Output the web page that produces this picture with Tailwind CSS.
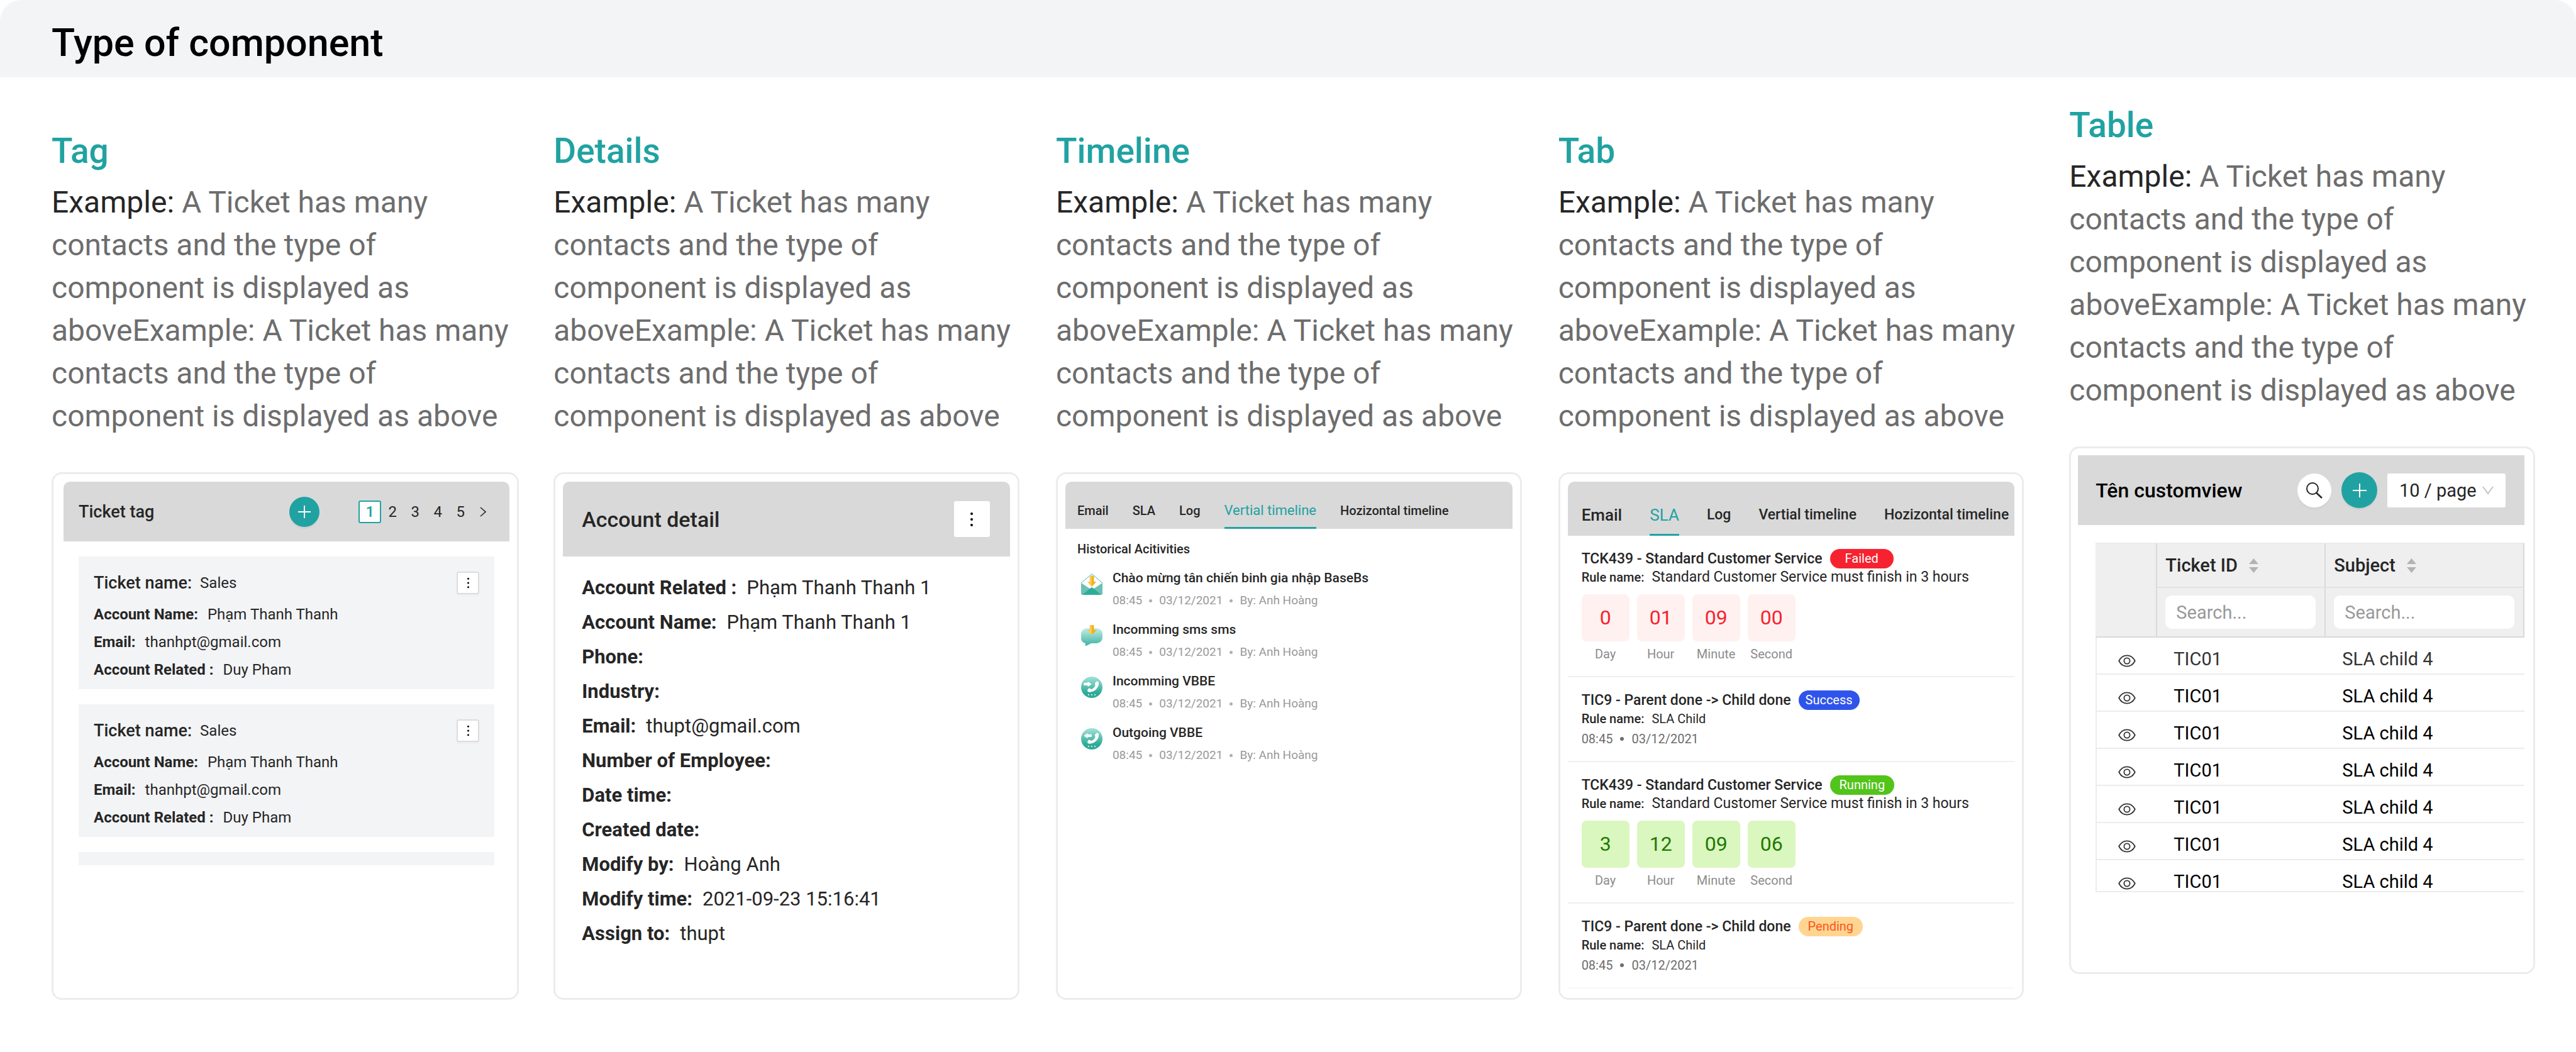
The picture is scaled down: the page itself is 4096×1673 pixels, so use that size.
<!DOCTYPE html>
<html lang="en">
<head>
<meta charset="utf-8">
<title>Type of component</title>
<script src="https://cdn.jsdelivr.net/npm/@tailwindcss/browser@4"></script>
</head>
<body class="bg-white font-['Roboto',sans-serif] text-[#262626]">

<!-- Shared icons -->
<svg class="absolute size-0" aria-hidden="true">
  <defs>
    <linearGradient id="g-bubble" x1="0" y1="0" x2="0" y2="1"><stop offset="0" stop-color="#c3ede6"/><stop offset="1" stop-color="#3cb2a2"/></linearGradient>
    <linearGradient id="g-call" x1="0" y1="0" x2="0" y2="1"><stop offset="0" stop-color="#a3e3d9"/><stop offset=".75" stop-color="#2fab98"/></linearGradient>
  </defs>
  <symbol id="i-plus" viewBox="0 0 22 22"><path d="M11 0v22M0 11h22" stroke="currentColor" stroke-width="2" fill="none"/></symbol>
  <symbol id="i-dots" viewBox="0 0 6 24"><circle cx="3" cy="3" r="2"/><circle cx="3" cy="12" r="2"/><circle cx="3" cy="21" r="2"/></symbol>
  <symbol id="i-eye" viewBox="0 0 28 20"><path d="M1.2 10C4.2 4.400 8.600 1.300 14 1.300S23.800 4.400 26.800 10C23.800 15.600 19.400 18.700 14 18.700S4.200 15.600 1.200 10Z" fill="none" stroke="currentColor" stroke-width="1.800" stroke-linejoin="round"/><circle cx="14" cy="10" r="4.600" fill="none" stroke="currentColor" stroke-width="1.800"/></symbol>
  <symbol id="i-sort" viewBox="0 0 15 23"><path d="M7.500 0 15 9H0ZM7.500 23 0 14h15Z"/></symbol>
  <symbol id="i-mail" viewBox="0 0 40 40">
    <path d="M.5 17.500 20 .8 39.500 17.500V30H.5Z" fill="#fff" stroke="#6cc8ba" stroke-width="1.200"/>
    <path d="M0 17.500 20 31 40 17.500V37.500a2.500 2.500 0 0 1-2.500 2.500h-35A2.500 2.500 0 0 1 0 37.500Z" fill="#69c2b3"/>
    <path d="M16.500 28.700 20 31l3.500-2.300L20 26Z" fill="#fff"/>
    <path d="M2 40 18 27q2-1.600 4 0L38 40Z" fill="#2fab98"/>
    <path d="M20 4h-2.500A1.500 1.500 0 0 0 16 5.500V15.300H11.500L20 25Z" fill="#fcc75f"/>
    <path d="M20 4h2.500A1.500 1.500 0 0 1 24 5.500V15.300H28.500L20 25Z" fill="#f0b414"/>
  </symbol>
  <symbol id="i-sms" viewBox="0 0 40 40">
    <path d="M11 6H29A11 11 0 0 1 40 17V23A11 11 0 0 1 29 34H19L9 39q-1 .3-1-1V34A9 9 0 0 1 0 24V17A11 11 0 0 1 11 6Z" fill="url(#g-bubble)"/>
    <path d="M20 0h-2.500A1.500 1.500 0 0 0 16 1.500V9H10L20 18Z" fill="#fcc75f"/>
    <path d="M20 0h2.500A1.500 1.500 0 0 1 24 1.500V9H30L20 18Z" fill="#f0b414"/>
  </symbol>
  <symbol id="i-handset" viewBox="0 0 40 40">
    <circle cx="20" cy="20" r="20" fill="url(#g-call)"/>
    <path d="M29.500 9c2.600-.4 3.800 1.400 3.500 4.500C32.300 21.500 25.500 28.800 16 29c-3 0-4.600-1-4-3.500.4-1.600 1.500-3.200 3-3.800 1.800-.4 2.700 1.900 4.300 1.800 3-.5 6.200-3.700 7.200-7 .2-1.400-1-2-.7-3.500.4-2 2-3.700 3.700-4Z" fill="#fff"/>
    <path d="M13 33h2v2h-2zM19 33h2v2h-2zM25 33h2v2h-2z" fill="#fff"/>
  </symbol>
  <symbol id="i-call-in" viewBox="0 0 40 40"><use href="#i-handset"/><path d="M5 11.500h7.500V9L19.700 14l-7.200 5V16.500H5Z" fill="#fff"/></symbol>
  <symbol id="i-call-out" viewBox="0 0 40 40"><use href="#i-handset"/><path d="M19.700 11.500h-7.500V9L5 14l7.200 5V16.500h7.500Z" fill="#fff"/></symbol>
</svg>

<header class="rounded-t-[34px] bg-[#f3f4f6] px-[82px] pt-[32px] pb-[19px]">
  <h1 class="text-[61px] leading-[72px] font-medium text-black">Type of component</h1>
</header>

<main class="flex items-start pr-[65px] pb-[83px] pl-[82px]">

  <!-- Tag -->
  <section class="min-w-0 flex-[871] pt-[85px]">
    <h2 class="text-[55px] leading-[64px] font-medium text-[#21a2a2]">Tag</h2>
    <p class="mt-[16px] text-[48px] leading-[68px] text-[#6d6d6d]"><span class="text-[#262626]">Example:</span> A Ticket has many contacts and the type of component is displayed as aboveExample: A Ticket has many contacts and the type of component is displayed as above</p>
    <div class="mt-[55px] min-h-[839px] rounded-[16px] border-[3px] border-[#ececec] pt-[12px] pr-[12px] pl-[16px]">
      <div class="flex h-[95px] items-center rounded-t-[10px] bg-[#d9d9d9] px-[24px]">
        <h3 class="grow text-[27px] leading-[36px] font-medium">Ticket tag</h3>
        <button type="button" aria-label="Add ticket" class="flex size-[48px] items-center justify-center rounded-full bg-[#21a2a2] text-white shadow-[0_3px_0_rgba(0,0,0,0.04)]"><svg class="size-[20px]"><use href="#i-plus"/></svg></button>
        <nav aria-label="Pages" class="ml-[62px] flex text-[24px] leading-[32px]">
          <button type="button" class="size-[36px] rounded-[3px] border-2 border-[#21a2a2] bg-white font-medium text-[#21a2a2]">1</button>
          <button type="button" class="size-[36px]">2</button>
          <button type="button" class="size-[36px]">3</button>
          <button type="button" class="size-[36px]">4</button>
          <button type="button" class="size-[36px]">5</button>
          <button type="button" aria-label="Next" class="flex size-[36px] items-center justify-center"><svg class="h-[16px] w-[10px]" viewBox="0 0 10 16"><path d="M1 1l8 7-8 7" fill="none" stroke="currentColor" stroke-width="1.600"/></svg></button>
        </nav>
      </div>
      <div class="flex flex-col gap-[24px] px-[24px] pt-[24px]">
        <article class="bg-[#f3f4f6] px-[24px] pt-[24px] pb-[9px]">
          <div class="mb-[10px] flex h-[36px] items-center gap-[13px]">
            <span class="text-[27px] leading-[36px] font-medium">Ticket name:</span><span class="grow text-[24px] leading-[36px]">Sales</span>
            <button type="button" aria-label="More" class="flex size-[36px] items-center justify-center rounded-[3px] border-2 border-[#dcdcdc] bg-white shadow-[0_3px_0_rgba(0,0,0,0.02)]"><svg class="h-[18px] w-[5px]"><use href="#i-dots"/></svg></button>
          </div>
          <p class="text-[24px] leading-[44px]"><b class="mr-[15px] font-bold">Account Name:</b>Phạm Thanh Thanh</p>
          <p class="text-[24px] leading-[44px]"><b class="mr-[15px] font-bold">Email:</b>thanhpt@gmail.com</p>
          <p class="text-[24px] leading-[44px]"><b class="mr-[15px] font-bold">Account Related :</b>Duy Pham</p>
        </article>
        <article class="bg-[#f3f4f6] px-[24px] pt-[24px] pb-[9px]">
          <div class="mb-[10px] flex h-[36px] items-center gap-[13px]">
            <span class="text-[27px] leading-[36px] font-medium">Ticket name:</span><span class="grow text-[24px] leading-[36px]">Sales</span>
            <button type="button" aria-label="More" class="flex size-[36px] items-center justify-center rounded-[3px] border-2 border-[#dcdcdc] bg-white shadow-[0_3px_0_rgba(0,0,0,0.02)]"><svg class="h-[18px] w-[5px]"><use href="#i-dots"/></svg></button>
          </div>
          <p class="text-[24px] leading-[44px]"><b class="mr-[15px] font-bold">Account Name:</b>Phạm Thanh Thanh</p>
          <p class="text-[24px] leading-[44px]"><b class="mr-[15px] font-bold">Email:</b>thanhpt@gmail.com</p>
          <p class="text-[24px] leading-[44px]"><b class="mr-[15px] font-bold">Account Related :</b>Duy Pham</p>
        </article>
        <div class="h-[21px] bg-[#f3f4f6]"></div>
      </div>
    </div>
  </section>

  <!-- Details -->
  <section class="ml-[55px] min-w-0 flex-[868] pt-[85px]">
    <h2 class="text-[55px] leading-[64px] font-medium text-[#21a2a2]">Details</h2>
    <p class="mt-[16px] text-[48px] leading-[68px] text-[#6d6d6d]"><span class="text-[#262626]">Example:</span> A Ticket has many contacts and the type of component is displayed as aboveExample: A Ticket has many contacts and the type of component is displayed as above</p>
    <div class="mt-[55px] min-h-[839px] rounded-[16px] border-[3px] border-[#ececec] px-[12px] pt-[12px]">
      <div class="flex h-[119px] items-center justify-between rounded-t-[10px] bg-[#d9d9d9] pr-[32px] pl-[30px]">
        <h3 class="text-[34px] leading-[44px] font-medium">Account detail</h3>
        <button type="button" aria-label="More" class="flex size-[57px] items-center justify-center rounded-[3px] bg-white"><svg class="h-[24px] w-[6px]"><use href="#i-dots"/></svg></button>
      </div>
      <div class="px-[30px] pt-[22px] text-[31px] leading-[55px]">
        <p><b class="mr-[16px] font-bold">Account Related :</b>Phạm Thanh Thanh 1</p>
        <p><b class="mr-[16px] font-bold">Account Name:</b>Phạm Thanh Thanh 1</p>
        <p><b class="font-bold">Phone:</b></p>
        <p><b class="font-bold">Industry:</b></p>
        <p><b class="mr-[16px] font-bold">Email:</b>thupt@gmail.com</p>
        <p><b class="font-bold">Number of Employee:</b></p>
        <p><b class="font-bold">Date time:</b></p>
        <p><b class="font-bold">Created date:</b></p>
        <p><b class="mr-[16px] font-bold">Modify by:</b>Hoàng Anh</p>
        <p><b class="mr-[16px] font-bold">Modify time:</b>2021-09-23 15:16:41</p>
        <p><b class="mr-[16px] font-bold">Assign to:</b>thupt</p>
      </div>
    </div>
  </section>

  <!-- Timeline -->
  <section class="ml-[58px] min-w-0 flex-[868] pt-[85px]">
    <h2 class="text-[55px] leading-[64px] font-medium text-[#21a2a2]">Timeline</h2>
    <p class="mt-[16px] text-[48px] leading-[68px] text-[#6d6d6d]"><span class="text-[#262626]">Example:</span> A Ticket has many contacts and the type of component is displayed as aboveExample: A Ticket has many contacts and the type of component is displayed as above</p>
    <div class="mt-[55px] min-h-[839px] rounded-[16px] border-[3px] border-[#ececec] px-[12px] pt-[12px]">
      <div role="tablist" class="flex items-end gap-[38px] rounded-t-[10px] bg-[#d9d9d9] px-[19px] pt-[32px] text-[20px] leading-[28px] font-medium whitespace-nowrap">
        <button type="button" role="tab" class="border-b-[3px] border-transparent pb-[12px]">Email</button>
        <button type="button" role="tab" class="border-b-[3px] border-transparent pb-[12px]">SLA</button>
        <button type="button" role="tab" class="border-b-[3px] border-transparent pb-[12px]">Log</button>
        <button type="button" role="tab" aria-selected="true" class="border-b-[3px] border-[#21a2a2] pb-[12px] text-[22px] font-normal text-[#21a2a2]">Vertial timeline</button>
        <button type="button" role="tab" class="border-b-[3px] border-transparent pb-[12px]">Hozizontal timeline</button>
      </div>
      <h3 class="mt-[18px] pl-[19px] text-[20px] leading-[28px] font-medium">Historical Acitivities</h3>
      <ul class="mt-[18px] flex flex-col gap-[18px] pl-[25px]">
        <li class="flex gap-[16px]">
          <svg class="mt-[7px] size-[34px]"><use href="#i-mail"/></svg>
          <div>
            <h4 class="text-[21px] leading-[28px] font-medium">Chào mừng tân chiến binh gia nhập BaseBs</h4>
            <p class="mt-[8px] flex items-center gap-[11px] text-[19px] leading-[28px] text-[#999]"><span>08:45</span><i class="size-[5px] rounded-full bg-[#b0b0b0]"></i><span>03/12/2021</span><i class="size-[5px] rounded-full bg-[#b0b0b0]"></i><span>By: Anh Hoàng</span></p>
          </div>
        </li>
        <li class="flex gap-[16px]">
          <svg class="mt-[7px] size-[34px]"><use href="#i-sms"/></svg>
          <div>
            <h4 class="text-[21px] leading-[28px] font-medium">Incomming sms sms</h4>
            <p class="mt-[8px] flex items-center gap-[11px] text-[19px] leading-[28px] text-[#999]"><span>08:45</span><i class="size-[5px] rounded-full bg-[#b0b0b0]"></i><span>03/12/2021</span><i class="size-[5px] rounded-full bg-[#b0b0b0]"></i><span>By: Anh Hoàng</span></p>
          </div>
        </li>
        <li class="flex gap-[16px]">
          <svg class="mt-[7px] size-[34px]"><use href="#i-call-in"/></svg>
          <div>
            <h4 class="text-[21px] leading-[28px] font-medium">Incomming VBBE</h4>
            <p class="mt-[8px] flex items-center gap-[11px] text-[19px] leading-[28px] text-[#999]"><span>08:45</span><i class="size-[5px] rounded-full bg-[#b0b0b0]"></i><span>03/12/2021</span><i class="size-[5px] rounded-full bg-[#b0b0b0]"></i><span>By: Anh Hoàng</span></p>
          </div>
        </li>
        <li class="flex gap-[16px]">
          <svg class="mt-[7px] size-[34px]"><use href="#i-call-out"/></svg>
          <div>
            <h4 class="text-[21px] leading-[28px] font-medium">Outgoing VBBE</h4>
            <p class="mt-[8px] flex items-center gap-[11px] text-[19px] leading-[28px] text-[#999]"><span>08:45</span><i class="size-[5px] rounded-full bg-[#b0b0b0]"></i><span>03/12/2021</span><i class="size-[5px] rounded-full bg-[#b0b0b0]"></i><span>By: Anh Hoàng</span></p>
          </div>
        </li>
      </ul>
    </div>
  </section>

  <!-- Tab -->
  <section class="ml-[58px] min-w-0 flex-[868] pt-[85px]">
    <h2 class="text-[55px] leading-[64px] font-medium text-[#21a2a2]">Tab</h2>
    <p class="mt-[16px] text-[48px] leading-[68px] text-[#6d6d6d]"><span class="text-[#262626]">Example:</span> A Ticket has many contacts and the type of component is displayed as aboveExample: A Ticket has many contacts and the type of component is displayed as above</p>
    <div class="mt-[55px] min-h-[839px] rounded-[16px] border-[3px] border-[#ececec] px-[12px] pt-[12px]">
      <div role="tablist" class="flex items-end gap-[44px] rounded-t-[10px] bg-[#d9d9d9] pt-[37px] pl-[22px] text-[23px] leading-[32px] font-medium whitespace-nowrap">
        <button type="button" role="tab" class="border-b-[3px] border-transparent pb-[14px] text-[26px]">Email</button>
        <button type="button" role="tab" aria-selected="true" class="border-b-[3px] border-[#21a2a2] pb-[14px] text-[26px] font-normal text-[#21a2a2]">SLA</button>
        <button type="button" role="tab" class="border-b-[3px] border-transparent pb-[14px]">Log</button>
        <button type="button" role="tab" class="border-b-[3px] border-transparent pb-[14px]">Vertial timeline</button>
        <button type="button" role="tab" class="border-b-[3px] border-transparent pb-[14px]">Hozizontal timeline</button>
      </div>

      <article class="border-b-2 border-[#f0f0f0] px-[22px] py-[21px]">
        <div class="flex items-center gap-[12px]"><h4 class="text-[23px] leading-[31px] font-medium">TCK439 - Standard Customer Service</h4><span class="rounded-full bg-[#f7222f] px-[24px] text-[20px] leading-[31px] text-white">Failed</span></div>
        <p class="flex items-baseline gap-[12px] text-[23px] leading-[28px]"><span class="text-[20px] font-medium">Rule name:</span>Standard Customer Service must finish in 3 hours</p>
        <div class="mt-[13px] flex gap-[12px] text-center text-[20px] leading-[28px] text-[#8c8c8c]">
          <div class="w-[76px]"><div class="mb-[6px] rounded-[8px] bg-[#fff1f0] text-[32px] leading-[75px] text-[#f7222f]">0</div>Day</div>
          <div class="w-[76px]"><div class="mb-[6px] rounded-[8px] bg-[#fff1f0] text-[32px] leading-[75px] text-[#f7222f]">01</div>Hour</div>
          <div class="w-[76px]"><div class="mb-[6px] rounded-[8px] bg-[#fff1f0] text-[32px] leading-[75px] text-[#f7222f]">09</div>Minute</div>
          <div class="w-[76px]"><div class="mb-[6px] rounded-[8px] bg-[#fff1f0] text-[32px] leading-[75px] text-[#f7222f]">00</div>Second</div>
        </div>
      </article>

      <article class="border-b-2 border-[#f0f0f0] px-[22px] py-[21px]">
        <div class="flex items-center gap-[12px]"><h4 class="text-[23px] leading-[31px] font-medium">TIC9 - Parent done -&gt; Child done</h4><span class="rounded-full bg-[#2f54eb] px-[11px] text-[20px] leading-[31px] text-white">Success</span></div>
        <p class="flex items-baseline gap-[12px] text-[20px] leading-[28px]"><span class="font-medium">Rule name:</span>SLA Child</p>
        <p class="mt-[4px] flex items-center gap-[12px] text-[20px] leading-[28px] text-[#6d6d6d]"><span>08:45</span><i class="size-[6px] rounded-full bg-[#6d6d6d]"></i><span>03/12/2021</span></p>
      </article>

      <article class="border-b-2 border-[#f0f0f0] px-[22px] py-[21px]">
        <div class="flex items-center gap-[12px]"><h4 class="text-[23px] leading-[31px] font-medium">TCK439 - Standard Customer Service</h4><span class="rounded-full bg-[#52c41a] px-[15px] text-[20px] leading-[31px] text-white">Running</span></div>
        <p class="flex items-baseline gap-[12px] text-[23px] leading-[28px]"><span class="text-[20px] font-medium">Rule name:</span>Standard Customer Service must finish in 3 hours</p>
        <div class="mt-[13px] flex gap-[12px] text-center text-[20px] leading-[28px] text-[#8c8c8c]">
          <div class="w-[76px]"><div class="mb-[6px] rounded-[8px] bg-[#d9f7be] text-[32px] leading-[75px] text-[#237804]">3</div>Day</div>
          <div class="w-[76px]"><div class="mb-[6px] rounded-[8px] bg-[#d9f7be] text-[32px] leading-[75px] text-[#237804]">12</div>Hour</div>
          <div class="w-[76px]"><div class="mb-[6px] rounded-[8px] bg-[#d9f7be] text-[32px] leading-[75px] text-[#237804]">09</div>Minute</div>
          <div class="w-[76px]"><div class="mb-[6px] rounded-[8px] bg-[#d9f7be] text-[32px] leading-[75px] text-[#237804]">06</div>Second</div>
        </div>
      </article>

      <article class="border-b-2 border-[#f7f7f7] px-[22px] py-[21px]">
        <div class="flex items-center gap-[12px]"><h4 class="text-[23px] leading-[31px] font-medium">TIC9 - Parent done -&gt; Child done</h4><span class="rounded-full bg-[#ffd591] px-[15px] text-[20px] leading-[31px] text-[#fa541c]">Pending</span></div>
        <p class="flex items-baseline gap-[12px] text-[20px] leading-[28px]"><span class="font-medium">Rule name:</span>SLA Child</p>
        <p class="mt-[4px] flex items-center gap-[12px] text-[20px] leading-[28px] text-[#6d6d6d]"><span>08:45</span><i class="size-[6px] rounded-full bg-[#6d6d6d]"></i><span>03/12/2021</span></p>
      </article>
    </div>
  </section>

  <!-- Table -->
  <section class="ml-[72px] min-w-0 flex-[868] pt-[44px]">
    <h2 class="text-[55px] leading-[64px] font-medium text-[#21a2a2]">Table</h2>
    <p class="mt-[16px] text-[48px] leading-[68px] text-[#6d6d6d]"><span class="text-[#262626]">Example:</span> A Ticket has many contacts and the type of component is displayed as aboveExample: A Ticket has many contacts and the type of component is displayed as above</p>
    <div class="mt-[55px] min-h-[839px] rounded-[16px] border-[3px] border-[#ececec] pt-[11px] pr-[14px] pl-[11px]">
      <div class="flex h-[111px] items-center gap-[16px] bg-[#d9d9d9] pr-[30px] pl-[28px]">
        <h3 class="grow text-[32px] leading-[44px] font-medium text-black">Tên customview</h3>
        <button type="button" aria-label="Search" class="flex size-[54px] items-center justify-center rounded-full bg-white shadow-[0_4px_0_rgba(0,0,0,0.02)]"><svg class="size-[26px]" viewBox="0 0 26 26"><circle cx="10" cy="10" r="9" fill="none" stroke="currentColor" stroke-width="2"/><path d="M16 16.500 25 25" stroke="currentColor" stroke-width="2.600"/></svg></button>
        <button type="button" aria-label="Add" class="flex size-[57px] items-center justify-center rounded-full bg-[#21a2a2] text-white shadow-[0_3px_0_rgba(0,0,0,0.04)]"><svg class="size-[22px]"><use href="#i-plus"/></svg></button>
        <div class="relative">
          <select aria-label="Rows per page" class="block h-[54px] w-[188px] appearance-none rounded-[3px] bg-white pl-[19px] text-[29px] leading-[40px]"><option>10 / page</option></select>
          <svg class="pointer-events-none absolute top-[20px] right-[19px] h-[14px] w-[18px]" viewBox="0 0 18 14"><path d="M1 1l8 11 8-11" fill="none" stroke="#bfbfbf" stroke-width="1.800"/></svg>
        </div>
      </div>
      <div class="pt-[28px] pl-[28px]">
        <table class="w-full table-fixed border-separate border-spacing-0 text-left text-[29px] leading-[30px] text-black">
          <colgroup><col class="w-[98px]"><col class="w-[268px]"><col></colgroup>
          <thead class="bg-[#efefef] text-[#262626]">
            <tr class="h-[72px]">
              <th rowspan="2" class="border-t-2 border-r-2 border-b-2 border-t-[#ececec] border-r-[#d9d9d9] border-b-[#d9d9d9]"></th>
              <th class="border-t-2 border-r-2 border-b-2 border-t-[#ececec] border-r-[#d9d9d9] border-b-[#e2e2e2] p-0 pl-[13px] font-medium"><span class="flex items-center gap-[18px]">Ticket ID<svg class="h-[23px] w-[15px] fill-[#b3b3b3]"><use href="#i-sort"/></svg></span></th>
              <th class="border-t-2 border-r-2 border-b-2 border-t-[#ececec] border-r-[#d9d9d9] border-b-[#e2e2e2] p-0 pl-[13px] font-medium"><span class="flex items-center gap-[18px]">Subject<svg class="h-[23px] w-[15px] fill-[#b3b3b3]"><use href="#i-sort"/></svg></span></th>
            </tr>
            <tr class="h-[79px]">
              <th class="border-r-2 border-b-2 border-[#d9d9d9] p-0 pr-[14px] pl-[13px] font-normal"><input type="text" aria-label="Search ticket ID" placeholder="Search..." class="block h-[53px] w-full rounded-[10px] bg-white px-[17px] placeholder:text-[#999]"></th>
              <th class="border-r-2 border-b-2 border-[#d9d9d9] p-0 pr-[14px] pl-[13px] font-normal"><input type="text" aria-label="Search subject" placeholder="Search..." class="block h-[53px] w-full rounded-[10px] bg-white px-[17px] placeholder:text-[#999]"></th>
            </tr>
          </thead>
          <tbody class="align-top">
            <tr class="text-[#333]"><td class="border-b-2 border-l-2 border-[#ececec] pt-[27px]"><svg class="mx-auto h-[20px] w-[28px] text-[#333]"><use href="#i-eye"/></svg></td><td class="border-b-2 border-[#ececec] pt-[19px] pb-[8px] pl-[26px]">TIC01</td><td class="border-b-2 border-[#ececec] pt-[19px] pb-[8px] pl-[26px]">SLA child 4</td></tr>
            <tr><td class="border-b-2 border-l-2 border-[#ececec] pt-[27px]"><svg class="mx-auto h-[20px] w-[28px] text-[#333]"><use href="#i-eye"/></svg></td><td class="border-b-2 border-[#ececec] pt-[19px] pb-[8px] pl-[26px]">TIC01</td><td class="border-b-2 border-[#ececec] pt-[19px] pb-[8px] pl-[26px]">SLA child 4</td></tr>
            <tr><td class="border-b-2 border-l-2 border-[#ececec] pt-[27px]"><svg class="mx-auto h-[20px] w-[28px] text-[#333]"><use href="#i-eye"/></svg></td><td class="border-b-2 border-[#ececec] pt-[19px] pb-[8px] pl-[26px]">TIC01</td><td class="border-b-2 border-[#ececec] pt-[19px] pb-[8px] pl-[26px]">SLA child 4</td></tr>
            <tr><td class="border-b-2 border-l-2 border-[#ececec] pt-[27px]"><svg class="mx-auto h-[20px] w-[28px] text-[#333]"><use href="#i-eye"/></svg></td><td class="border-b-2 border-[#ececec] pt-[19px] pb-[8px] pl-[26px]">TIC01</td><td class="border-b-2 border-[#ececec] pt-[19px] pb-[8px] pl-[26px]">SLA child 4</td></tr>
            <tr><td class="border-b-2 border-l-2 border-[#ececec] pt-[27px]"><svg class="mx-auto h-[20px] w-[28px] text-[#333]"><use href="#i-eye"/></svg></td><td class="border-b-2 border-[#ececec] pt-[19px] pb-[8px] pl-[26px]">TIC01</td><td class="border-b-2 border-[#ececec] pt-[19px] pb-[8px] pl-[26px]">SLA child 4</td></tr>
            <tr><td class="border-b-2 border-l-2 border-[#ececec] pt-[27px]"><svg class="mx-auto h-[20px] w-[28px] text-[#333]"><use href="#i-eye"/></svg></td><td class="border-b-2 border-[#ececec] pt-[19px] pb-[8px] pl-[26px]">TIC01</td><td class="border-b-2 border-[#ececec] pt-[19px] pb-[8px] pl-[26px]">SLA child 4</td></tr>
            <tr><td class="border-b-2 border-l-2 border-[#ececec] pt-[27px]"><svg class="mx-auto h-[20px] w-[28px] text-[#333]"><use href="#i-eye"/></svg></td><td class="border-b-2 border-[#ececec] pt-[19px] pl-[26px]">TIC01</td><td class="border-b-2 border-[#ececec] pt-[19px] pl-[26px]">SLA child 4</td></tr>
          </tbody>
        </table>
      </div>
    </div>
  </section>
</main>
</body>
</html>
